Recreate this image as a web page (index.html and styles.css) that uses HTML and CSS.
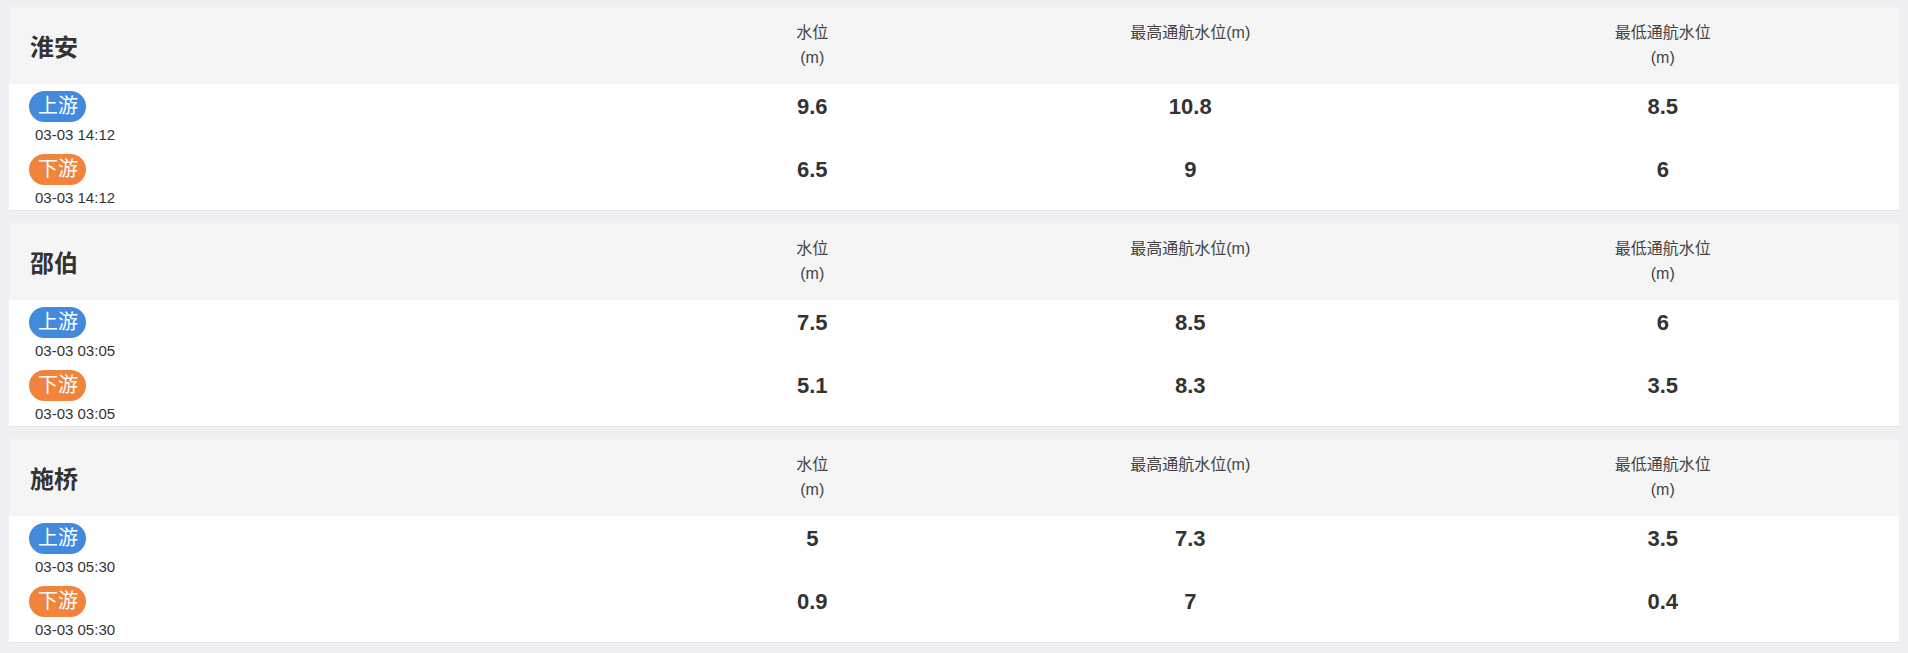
FILE: index.html
```html
<!DOCTYPE html>
<html lang="zh-CN">
<head>
<meta charset="utf-8">
<title>水位</title>
<link rel="stylesheet" href="styles.css">
</head>
<body>
<div class="page">
  <section class="card">
    <div class="head">
      <div class="name">淮安</div>
      <div class="label">水位<br>(m)</div>
      <div class="label">最高通航水位(m)</div>
      <div class="label">最低通航水位<br>(m)</div>
    </div>
    <div class="body">
      <div class="row">
        <div class="site"><span class="tag up">上游</span><span class="time">03-03 14:12</span></div>
        <div class="val">9.6</div><div class="val">10.8</div><div class="val">8.5</div>
      </div>
      <div class="row">
        <div class="site"><span class="tag down">下游</span><span class="time">03-03 14:12</span></div>
        <div class="val">6.5</div><div class="val">9</div><div class="val">6</div>
      </div>
    </div>
  </section>
  <section class="card">
    <div class="head">
      <div class="name">邵伯</div>
      <div class="label">水位<br>(m)</div>
      <div class="label">最高通航水位(m)</div>
      <div class="label">最低通航水位<br>(m)</div>
    </div>
    <div class="body">
      <div class="row">
        <div class="site"><span class="tag up">上游</span><span class="time">03-03 03:05</span></div>
        <div class="val">7.5</div><div class="val">8.5</div><div class="val">6</div>
      </div>
      <div class="row">
        <div class="site"><span class="tag down">下游</span><span class="time">03-03 03:05</span></div>
        <div class="val">5.1</div><div class="val">8.3</div><div class="val">3.5</div>
      </div>
    </div>
  </section>
  <section class="card">
    <div class="head">
      <div class="name">施桥</div>
      <div class="label">水位<br>(m)</div>
      <div class="label">最高通航水位(m)</div>
      <div class="label">最低通航水位<br>(m)</div>
    </div>
    <div class="body">
      <div class="row">
        <div class="site"><span class="tag up">上游</span><span class="time">03-03 05:30</span></div>
        <div class="val">5</div><div class="val">7.3</div><div class="val">3.5</div>
      </div>
      <div class="row">
        <div class="site"><span class="tag down">下游</span><span class="time">03-03 05:30</span></div>
        <div class="val">0.9</div><div class="val">7</div><div class="val">0.4</div>
      </div>
    </div>
  </section>
</div>
</body>
</html>
```
FILE: styles.css
```css
* { box-sizing: border-box; }
html, body {
  margin: 0;
  padding: 0;
  background: #efeff4;
}
body {
  font-family: "Liberation Sans", Arial, "Noto Sans CJK SC", sans-serif;
  color: #333;
}
.page {
  padding: 7px 9px 0;
  display: flex;
  flex-direction: column;
  gap: 12px;
}
.card {
  background: #fff;
}
.head, .row {
  display: grid;
  grid-template-columns: 35% 15% 25% 25%;
}
.head {
  height: 77px;
  background: #f5f5f6;
}
.name {
  display: flex;
  align-items: center;
  padding-left: 21px;
  font-size: 24px;
  font-weight: bold;
  color: #333;
}
.label {
  padding-top: 13px;
  text-align: center;
  font-size: 16px;
  line-height: 25px;
  color: #444;
}
.body {
  height: 127px;
  border-bottom: 1px solid #e6e6e8;
}
.row {
  height: 63px;
  padding-top: 7px;
}
.site {
  padding-left: 20px;
  display: flex;
  flex-direction: column;
  align-items: flex-start;
}
.tag {
  display: inline-block;
  height: 31px;
  line-height: 31px;
  padding: 0 8px 0 9px;
  border-radius: 16px;
  font-size: 20px;
  color: #fff;
}
.tag.up { background: #418ade; }
.tag.down { background: #f1843d; }
.time {
  margin-top: 4px;
  padding-left: 6px;
  font-size: 15px;
  line-height: 17px;
  color: #333;
}
.val {
  text-align: center;
  font-size: 22px;
  font-weight: bold;
  line-height: 31px;
  color: #333;
}
```
